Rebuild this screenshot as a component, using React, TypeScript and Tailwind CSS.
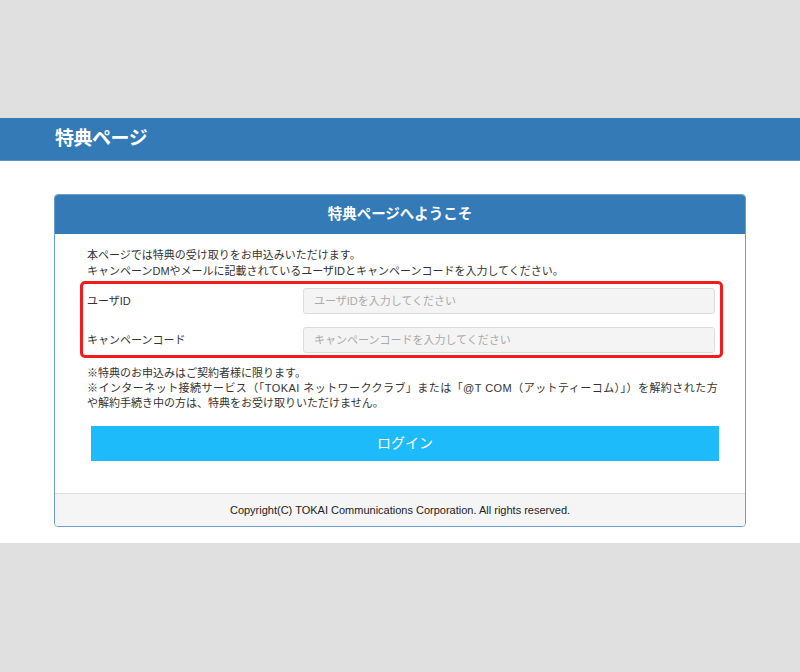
export default function App() {
  return (
    <div className="w-[800px] h-[672px] bg-[#e0e0e0] flex flex-col font-['Liberation_Sans','Noto_Sans_CJK_JP',sans-serif] text-[#333]">
      {/* Top gap */}
      <div className="h-[118px]" />
      {/* Site header */}
      <div className="h-[43px] bg-[#337ab7] px-[55px] flex items-center border-b border-[#5d93c6]">
        <h1 className="text-white text-[19px] font-bold tracking-tight">特典ページ</h1>
      </div>
      {/* Main */}
      <div className="bg-white pt-[33px] pb-[16px] pl-[54px] pr-[54px]">
        <div className="border border-[#6d9fd0] rounded-[4px] overflow-hidden">
          {/* Panel header */}
          <div className="h-[39px] bg-[#337ab7] flex items-center justify-center">
            <h2 className="text-white text-[14.5px] font-bold">特典ページへようこそ</h2>
          </div>
          {/* Panel body */}
          <div className="pt-[13px] pb-[32px] pl-[25px] pr-[22px] text-[11px]">
            <div className="pl-[7px] leading-[16px]">
              <p>本ページでは特典の受け取りをお申込みいただけます。</p>
              <p>キャンペーンDMやメールに記載されているユーザIDとキャンペーンコードを入力してください。</p>
            </div>
            {/* Form (highlighted) */}
            <div className="mt-[2px] border-[3px] border-[#f21c1c] rounded-[5px] pt-[4px] pb-[2px] pl-[4px] pr-[5px] flex flex-col gap-[13px]">
              <div className="flex items-center">
                <label className="w-[216px] text-[11px]">ユーザID</label>
                <input
                  className="flex-1 h-[26px] bg-[#f4f4f4] border border-[#dcdcdc] rounded-[3px] px-[10px] text-[11px] placeholder:text-[#aaa] outline-none"
                  placeholder="ユーザIDを入力してください"
                />
              </div>
              <div className="flex items-center">
                <label className="w-[216px] text-[11px]">キャンペーンコード</label>
                <input
                  className="flex-1 h-[26px] bg-[#f4f4f4] border border-[#dcdcdc] rounded-[3px] px-[10px] text-[11px] placeholder:text-[#aaa] outline-none"
                  placeholder="キャンペーンコードを入力してください"
                />
              </div>
            </div>
            {/* Notes */}
            <div className="mt-[8px] pl-[7px] leading-[15px] text-[11px]">
              <p>※特典のお申込みはご契約者様に限ります。</p>
              <p className="tracking-[0.45px]">※インターネット接続サービス（「TOKAI ネットワーククラブ」または「@T COM（アットティーコム）」）を解約された方</p>
              <p>や解約手続き中の方は、特典をお受け取りいただけません。</p>
            </div>
            {/* Login button */}
            <div className="mt-[15px] ml-[11px] mr-[4px]">
              <button className="w-full h-[35px] bg-[#1ebbfa] text-white text-[14px]">ログイン</button>
            </div>
          </div>
          {/* Footer */}
          <div className="h-[33px] bg-[#f5f5f5] border-t border-[#dddddd] flex items-center justify-center text-[11px] text-[#222]">
            Copyright(C) TOKAI Communications Corporation. All rights reserved.
          </div>
        </div>
      </div>
    </div>
  );
}
